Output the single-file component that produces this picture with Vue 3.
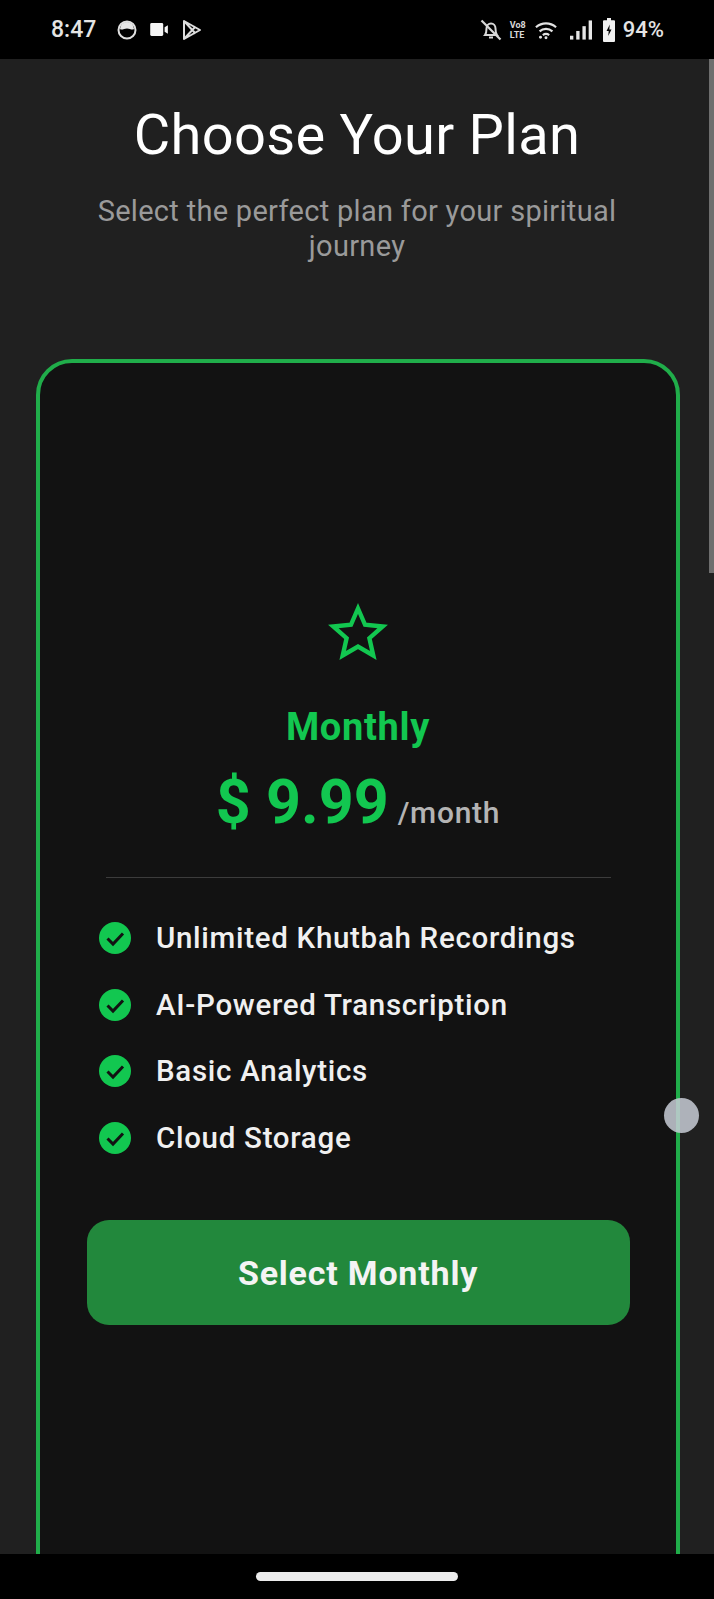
<script setup>
const features = [
  "Unlimited Khutbah Recordings",
  "AI-Powered Transcription",
  "Basic Analytics",
  "Cloud Storage",
];
</script>

<template>
  <div class="screen">
    <!-- Status bar -->
    <div class="status-bar">
      <div class="status-left">
        <span class="clock">8:47</span>
        <svg class="ic-circle" viewBox="0 0 20 20">
          <circle cx="10" cy="10" r="8.500" fill="none" stroke="#e0e0e0" stroke-width="2" />
          <path d="M3 9a7 7 0 0 1 14 0c-2 1.500-4-.5-7-.5S5 10.500 3 9z" fill="#e6e6e6" />
        </svg>
        <svg class="ic-video" viewBox="0 0 20 14">
          <rect x="0" y="0" width="14" height="14" rx="1.500" fill="#f4f4f4" />
          <path d="M15.500 4.500 19 2.500v9l-3.500-2z" fill="#f4f4f4" />
        </svg>
        <svg class="ic-play" viewBox="0 0 20 22">
          <path d="M2 2v18l16-9zM2 2l11.500 12.500M2 20 13.500 7.500" fill="none" stroke="#dedede" stroke-width="2" stroke-linejoin="round" />
        </svg>
      </div>
      <div class="status-right">
        <svg class="ic-bell" viewBox="0 0 22 22">
          <path d="M5 16c1.500-2 1.500-4 1.500-6.500C6.500 6.500 8.500 4.500 11 4.500s4.500 2 4.500 5c0 2.500 0 4.500 1.500 6.500z" fill="none" stroke="#d8d8d8" stroke-width="2" />
          <path d="M9 18.500h4M1.500 1.500l19 19" stroke="#d8d8d8" stroke-width="2.200" />
        </svg>
        <div class="volte"><span>Vo8</span><span>LTE</span></div>
        <svg class="ic-wifi" viewBox="0 0 24 20">
          <g fill="none" stroke="#e2e2e2" stroke-width="2.400">
            <path d="M1 7c6.500-5.500 15.500-5.500 22 0" />
            <path d="M5 11.500c4-3.500 10-3.500 14 0" />
            <path d="M8.500 15.500c2-1.500 5-1.500 7 0" />
          </g>
          <circle cx="6" cy="18" r="1.600" fill="#e2e2e2" />
          <circle cx="12" cy="18.400" r="1.600" fill="#e2e2e2" />
        </svg>
        <svg class="ic-signal" viewBox="0 0 23 20">
          <rect x="0" y="16" width="3.500" height="4" fill="#e6e6e6" />
          <rect x="6.500" y="11" width="3.500" height="9" fill="#e6e6e6" />
          <rect x="13" y="6" width="3.500" height="14" fill="#e6e6e6" />
          <rect x="19.500" y="0" width="3.500" height="20" fill="#e6e6e6" />
        </svg>
        <svg class="ic-battery" viewBox="0 0 12 22" preserveAspectRatio="none">
          <path d="M4 0h4v2h3a1 1 0 0 1 1 1v18a1 1 0 0 1-1 1H1a1 1 0 0 1-1-1V3a1 1 0 0 1 1-1h3z" fill="#f0f0f0" />
          <path d="M6.800 6 3.500 12h2.200l-.5 4.500L8.500 10.500H6.300z" fill="#000" />
        </svg>
        <span class="percent">94%</span>
      </div>
    </div>

    <!-- Page -->
    <div class="content">
      <div class="scrollbar"></div>
      <h1 class="title">Choose Your Plan</h1>
      <p class="subtitle">Select the perfect plan for your spiritual journey</p>

      <div class="plan-card">
        <svg class="star" viewBox="0 0 60 60">
          <path d="M30 6.500 37.050 22.800 54.700 24.500 41.400 36.200 45.300 53.500 30 44.500 14.700 53.500 18.600 36.200 5.300 24.500 22.950 22.800z" fill="none" stroke="#12c750" stroke-width="4.400" stroke-linejoin="miter" />
        </svg>
        <div class="plan-name">Monthly</div>
        <div class="price-row">
          <span class="price">$ 9.99</span>
          <span class="period">/month</span>
        </div>
        <div class="divider"></div>
        <ul class="features">
          <li v-for="item in features" :key="item" class="feature">
            <svg class="check" viewBox="0 0 32 32">
              <circle cx="16" cy="16" r="16" fill="#12c750" />
              <path d="M8.500 16.500 14 22 24 11.500" fill="none" stroke="#121212" stroke-width="3" />
            </svg>
            <span>{{ item }}</span>
          </li>
        </ul>
        <button class="select-btn">Select Monthly</button>
      </div>
      <div class="touch-dot"></div>
    </div>

    <!-- Gesture bar -->
    <div class="nav-bar"><div class="home-pill"></div></div>
  </div>
</template>

<style>
html, body { margin: 0; background: #000; }
</style>

<style scoped>
.screen {
  width: 714px;
  height: 1599px;
  display: flex;
  flex-direction: column;
  overflow: hidden;
  background: #000;
  font-family: Roboto, "Liberation Sans", sans-serif;
}
.status-bar {
  height: 59px;
  flex-shrink: 0;
  display: flex;
  align-items: center;
  justify-content: space-between;
  padding: 0 50px 0 51px;
  color: #e4e4e4;
}
.status-left, .status-right { display: flex; align-items: center; }
.clock { font-size: 23px; font-weight: 500; margin-right: 21px; }
.ic-circle { width: 20px; height: 20px; margin-right: 13px; }
.ic-video { width: 19px; height: 13px; margin-right: 13px; }
.ic-play { width: 20px; height: 22px; }
.ic-bell { width: 22px; height: 22px; margin-right: 8px; }
.volte {
  display: flex;
  flex-direction: column;
  font-size: 9px;
  font-weight: 700;
  line-height: 10px;
  width: 18px;
  margin-right: 7px;
  color: #d8d8d8;
}
.ic-wifi { width: 22px; height: 20px; margin-right: 13px; }
.ic-signal { width: 22px; height: 20px; margin-right: 11px; }
.ic-battery { width: 12px; height: 24px; margin-right: 8px; }
.percent { font-size: 22px; font-weight: 500; }

.content {
  position: relative;
  flex: 1;
  min-height: 0;
  overflow: hidden;
  background: #202020;
  display: flex;
  flex-direction: column;
  align-items: center;
}
.scrollbar {
  position: absolute;
  top: 0;
  right: 0;
  width: 5px;
  height: 514px;
  background: #6e6e6e;
}
.title {
  margin: 46px 0 0;
  font-size: 56px;
  line-height: 60px;
  font-weight: 400;
  letter-spacing: 0.3px;
  color: #fff;
}
.subtitle {
  margin: 29px 0 0;
  width: 560px;
  font-size: 29px;
  line-height: 35px;
  letter-spacing: 0.3px;
  text-align: center;
  color: #9a9a9a;
}
.plan-card {
  margin: 95px 0 0 36px;
  align-self: flex-start;
  flex-shrink: 0;
  box-sizing: border-box;
  width: 644px;
  height: 1400px;
  padding: 239px 49px 0;
  border: 4px solid #20ad4a;
  border-radius: 36px;
  background: #121212;
  display: flex;
  flex-direction: column;
  align-items: center;
}
.star { width: 60px; height: 60px; }
.plan-name {
  margin-top: 43px;
  font-size: 38px;
  line-height: 44px;
  font-weight: 700;
  letter-spacing: 0.7px;
  color: #12c750;
}
.price-row {
  margin-top: 17px;
  display: flex;
  align-items: baseline;
  gap: 9px;
}
.price {
  font-size: 61px;
  line-height: 72px;
  font-weight: 700;
  color: #12c750;
}
.period {
  font-size: 30px;
  font-weight: 500;
  letter-spacing: 0.7px;
  color: #b4b4b4;
}
.divider {
  margin-top: 39px;
  width: 505px;
  height: 1px;
  background: #3c3c3c;
}
.features {
  list-style: none;
  margin: 27px 0 0;
  padding: 0 0 0 10px;
  width: 100%;
  box-sizing: border-box;
}
.feature {
  height: 66.600px;
  display: flex;
  align-items: center;
  gap: 25px;
  font-size: 29.500px;
  font-weight: 500;
  letter-spacing: 0.7px;
  color: #f0f0f0;
}
.check { width: 32px; height: 32px; flex-shrink: 0; }
.select-btn {
  margin-top: 49px;
  width: 543px;
  height: 105px;
  border: 0;
  border-radius: 22px;
  background: #22883c;
  color: #f4f4f4;
  font-family: inherit;
  font-size: 34px;
  font-weight: 700;
  letter-spacing: 0.8px;
}
.touch-dot {
  position: absolute;
  left: 664px;
  top: 1039px;
  width: 35px;
  height: 35px;
  border-radius: 50%;
  background: rgba(200, 204, 214, 0.85);
}
.nav-bar {
  height: 45px;
  flex-shrink: 0;
  background: #000;
  display: flex;
  justify-content: center;
  padding-top: 18px;
  box-sizing: border-box;
}
.home-pill {
  width: 202px;
  height: 9px;
  border-radius: 5px;
  background: #ececec;
}
</style>
